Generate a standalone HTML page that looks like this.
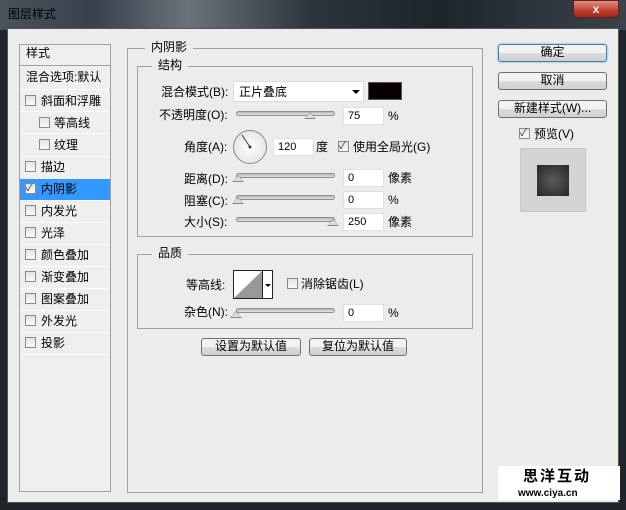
<!DOCTYPE html><html><head><meta charset="utf-8"><style>
*{margin:0;padding:0;box-sizing:border-box}
body{width:626px;height:510px;overflow:hidden;background:#1e252d;font-family:"Liberation Sans","Noto Sans CJK SC",sans-serif;font-size:12px;color:#000;position:relative}
.a{position:absolute}
.t{position:absolute;white-space:nowrap;line-height:14px}
.cb{position:absolute;width:11px;height:11px;border:1px solid #8a8a8a;background:linear-gradient(#e4e4e4,#fafafa)}
.in{position:absolute;background:#fff;border:1px solid #e0e0e0;height:18px;padding-left:4px;line-height:16px;font-size:11px}
.tr{position:absolute;height:5px;border:1px solid #8f8f8f;border-radius:3px;background:linear-gradient(#b8b8b8,#e0e0e0)}
.th{position:absolute;width:0;height:0;border-left:6px solid transparent;border-right:6px solid transparent;border-bottom:7px solid #888}
.th:after{content:"";position:absolute;left:-5px;top:1px;border-left:5px solid transparent;border-right:5px solid transparent;border-bottom:5px solid #ddd}
.btn{position:absolute;border:1px solid #707070;border-radius:3px;background:linear-gradient(#f2f2f2 50%,#dcdcdc 50%,#d0d0d0);text-align:center;line-height:15px}
.grp{position:absolute;border:1px solid #a0a0a0}
.lbl{position:absolute;background:#ececec;padding:0 6px;line-height:14px}
.row{position:absolute;left:20px;width:89px;height:22px;border-top:1px solid #fff}
</style></head><body>
<div class="a" style="left:0;top:0;width:626px;height:30px;background:linear-gradient(90deg,#4a525c,#38414c 15%,#6a727b 30%,#2c333c 50%,#1e242c 70%,#3a424c 100%)"></div>
<div class="t" style="left:8px;top:7px;color:#000">图层样式</div>
<div class="a" style="left:573px;top:0;width:46px;height:18px;border:1px solid #602020;border-radius:0 0 4px 4px;background:linear-gradient(#e09080,#c04030 60%,#a02818);color:#fff;text-align:center;font-weight:bold;line-height:16px">x</div>
<div class="a" style="left:7px;top:28px;width:612px;height:475px;background:#ececec;border:1px solid #555"></div>
<div class="a" style="left:19px;top:44px;width:92px;height:448px;border:1px solid #a0a0a0;background:#efefef"></div>
<div class="t" style="left:26px;top:46px">样式</div>
<div class="a" style="left:20px;top:65px;width:90px;height:1px;background:#a0a0a0"></div>
<div class="t" style="left:26px;top:70px">混合选项:默认</div>
<div class="a" style="left:20px;top:89px;width:90px;height:1px;background:#a0a0a0"></div>
<div class="row" style="top:89px"></div><div class="cb" style="left:25px;top:95px"></div><div class="t" style="left:41px;top:94px">斜面和浮雕</div>
<div class="row" style="top:111px"></div><div class="cb" style="left:39px;top:117px"></div><div class="t" style="left:54px;top:116px">等高线</div>
<div class="row" style="top:133px"></div><div class="cb" style="left:39px;top:139px"></div><div class="t" style="left:54px;top:138px">纹理</div>
<div class="row" style="top:156px"></div><div class="cb" style="left:25px;top:161px"></div><div class="t" style="left:41px;top:160px">描边</div>
<div class="a" style="left:20px;top:179px;width:90px;height:21px;background:#3399ff"></div><div class="cb" style="left:25px;top:183px;font-size:10px;line-height:9px;color:#226">✓</div><div class="t" style="left:41px;top:182px">内阴影</div>
<div class="row" style="top:200px"></div><div class="cb" style="left:25px;top:205px"></div><div class="t" style="left:41px;top:204px">内发光</div>
<div class="row" style="top:222px"></div><div class="cb" style="left:25px;top:227px"></div><div class="t" style="left:41px;top:226px">光泽</div>
<div class="row" style="top:244px"></div><div class="cb" style="left:25px;top:249px"></div><div class="t" style="left:41px;top:248px">颜色叠加</div>
<div class="row" style="top:266px"></div><div class="cb" style="left:25px;top:271px"></div><div class="t" style="left:41px;top:270px">渐变叠加</div>
<div class="row" style="top:288px"></div><div class="cb" style="left:25px;top:293px"></div><div class="t" style="left:41px;top:292px">图案叠加</div>
<div class="row" style="top:310px"></div><div class="cb" style="left:25px;top:315px"></div><div class="t" style="left:41px;top:314px">外发光</div>
<div class="row" style="top:332px"></div><div class="cb" style="left:25px;top:337px"></div><div class="t" style="left:41px;top:336px">投影</div>
<div class="row" style="top:354px;height:1px"></div>
<div class="grp" style="left:127px;top:48px;width:356px;height:445px"></div>
<div class="lbl" style="left:145px;top:40px">内阴影</div>
<div class="grp" style="left:137px;top:66px;width:336px;height:171px"></div>
<div class="lbl" style="left:152px;top:58px">结构</div>
<div class="t" style="left:161px;top:85px">混合模式(B):</div>
<div class="a" style="left:233px;top:81px;width:131px;height:21px;background:#fff;border:1px solid #ddd"></div>
<div class="t" style="left:239px;top:85px">正片叠底</div>
<div class="a" style="left:352px;top:90px;border-left:4px solid transparent;border-right:4px solid transparent;border-top:4px solid #000"></div>
<div class="a" style="left:368px;top:82px;width:34px;height:18px;background:#0a0000;border:1px solid #555"></div>
<div class="t" style="left:159px;top:108px">不透明度(O):</div>
<div class="tr" style="left:236px;top:111px;width:99px"></div><div class="th" style="left:304px;top:112px"></div>
<div class="in" style="left:343px;top:107px;width:41px">75</div><div class="t" style="left:388px;top:109px">%</div>
<div class="t" style="left:184px;top:140px">角度(A):</div>
<div class="a" style="left:233px;top:130px;width:34px;height:34px;border-radius:50%;border:1px solid #888;background:radial-gradient(#fff,#ddd)"></div>
<svg class="a" style="left:233px;top:130px" width="34" height="34"><line x1="17" y1="17" x2="9" y2="5" stroke="#333" stroke-width="1"/><circle cx="17" cy="17" r="1.5" fill="#333"/></svg>
<div class="in" style="left:273px;top:138px;width:41px">120</div><div class="t" style="left:316px;top:140px">度</div>
<div class="cb" style="left:338px;top:141px;font-size:10px;line-height:9px;color:#226">✓</div><div class="t" style="left:353px;top:140px">使用全局光(G)</div>
<div class="t" style="left:184px;top:172px">距离(D):</div>
<div class="tr" style="left:236px;top:173px;width:99px"></div><div class="th" style="left:232px;top:175px"></div>
<div class="in" style="left:343px;top:169px;width:41px">0</div><div class="t" style="left:388px;top:171px">像素</div>
<div class="t" style="left:184px;top:194px">阻塞(C):</div>
<div class="tr" style="left:236px;top:195px;width:99px"></div><div class="th" style="left:232px;top:197px"></div>
<div class="in" style="left:343px;top:191px;width:41px">0</div><div class="t" style="left:388px;top:193px">%</div>
<div class="t" style="left:184px;top:215px">大小(S):</div>
<div class="tr" style="left:236px;top:217px;width:99px"></div><div class="th" style="left:327px;top:219px"></div>
<div class="in" style="left:343px;top:213px;width:41px">250</div><div class="t" style="left:388px;top:215px">像素</div>
<div class="grp" style="left:137px;top:254px;width:336px;height:75px"></div>
<div class="lbl" style="left:152px;top:246px">品质</div>
<div class="t" style="left:186px;top:278px">等高线:</div>
<div class="a" style="left:233px;top:270px;width:40px;height:29px;border:1px solid #222;background:#fff"></div>
<svg class="a" style="left:234px;top:271px" width="28" height="27"><polygon points="0,27 28,0 28,27" fill="#999"/></svg>
<div class="a" style="left:262px;top:271px;width:1px;height:27px;background:#222"></div>
<div class="a" style="left:265px;top:284px;border-left:3px solid transparent;border-right:3px solid transparent;border-top:3px solid #000"></div>
<div class="cb" style="left:287px;top:278px"></div><div class="t" style="left:301px;top:277px">消除锯齿(L)</div>
<div class="t" style="left:184px;top:305px">杂色(N):</div>
<div class="tr" style="left:236px;top:308px;width:99px"></div><div class="th" style="left:230px;top:311px"></div>
<div class="in" style="left:343px;top:304px;width:41px">0</div><div class="t" style="left:388px;top:306px">%</div>
<div class="btn" style="left:201px;top:338px;width:100px;height:18px">设置为默认值</div>
<div class="btn" style="left:309px;top:338px;width:98px;height:18px">复位为默认值</div>
<div class="btn" style="left:498px;top:44px;width:109px;height:18px;border-color:#3c7fb1;box-shadow:0 0 2px #6ac">确定</div>
<div class="btn" style="left:498px;top:72px;width:109px;height:18px">取消</div>
<div class="btn" style="left:498px;top:100px;width:109px;height:18px">新建样式(W)...</div>
<div class="cb" style="left:519px;top:128px;font-size:10px;line-height:9px;color:#226">✓</div><div class="t" style="left:534px;top:127px">预览(V)</div>
<div class="a" style="left:520px;top:148px;width:66px;height:64px;background:#d4d4d4;border:1px solid #c8c8c8"></div>
<div class="a" style="left:537px;top:165px;width:32px;height:31px;background:radial-gradient(#5a5a5a,#262626)"></div>
<div class="a" style="left:498px;top:466px;width:122px;height:34px;background:#fff"></div>
<div class="t" style="left:523px;top:470px;font-size:15px;font-weight:bold;letter-spacing:2px">思洋互动</div>
<div class="t" style="left:518px;top:487px;font-size:10px;font-weight:bold">www.ciya.cn</div>
</body></html>
